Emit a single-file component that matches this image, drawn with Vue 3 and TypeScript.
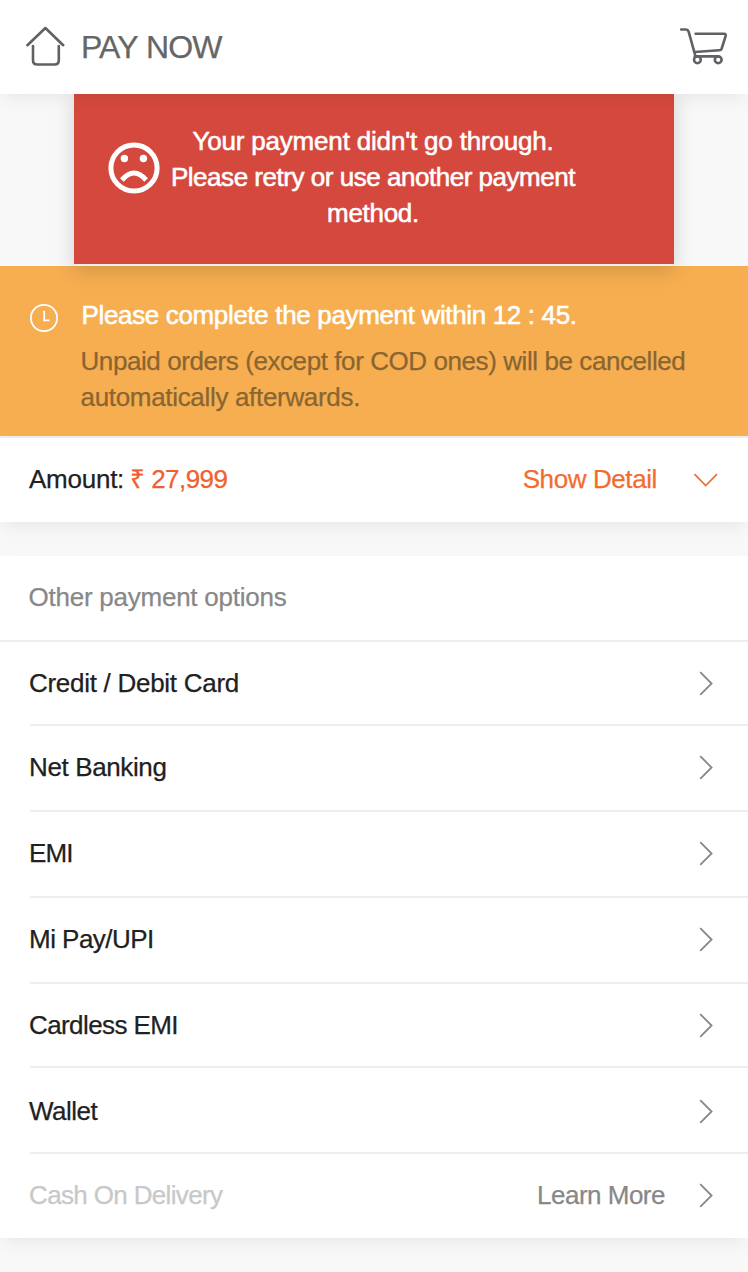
<script setup lang="ts">
interface PaymentOption {
  id: string
  label: string
  action?: string
}

const options: PaymentOption[] = [
  { id: 'card', label: 'Credit / Debit Card' },
  { id: 'net', label: 'Net Banking' },
  { id: 'emi', label: 'EMI' },
  { id: 'upi', label: 'Mi Pay/UPI' },
  { id: 'cardless', label: 'Cardless EMI' },
  { id: 'wallet', label: 'Wallet' },
  { id: 'cod', label: 'Cash On Delivery', action: 'Learn More' },
]
</script>

<template>
  <div class="page">
    <header class="topbar">
      <svg class="home" width="40" height="42" viewBox="0 0 40 42" fill="none">
        <path d="M2.4 20.2 20.4 3 38.2 20.2" />
        <path d="M8 21v14.2q0 4.3 4.3 4.3h17.2q4.3 0 4.3-4.3V21" />
      </svg>
      <h1 class="title">PAY NOW</h1>
      <svg class="cart" width="50" height="40" viewBox="0 0 50 40" fill="none">
        <path d="M2.2 4.5h4.3q2.5 0 3.2 2.4L16.4 31" />
        <path d="M16.6 8.7h28.2q2.5 0 1.8 2.4l-3.9 12.4q-.6 1.7-2.4 1.8L15.6 27" />
        <path d="M15.8 31.4H39" />
        <circle cx="18.4" cy="34.8" r="3.4" />
        <circle cx="39.2" cy="34.8" r="3.4" />
      </svg>
    </header>

    <div class="alert">
      <svg class="sad" width="52" height="52" viewBox="0 0 52 52" fill="none">
        <circle cx="26" cy="26" r="23.1" stroke="#fff" stroke-width="5" />
        <circle cx="16.4" cy="16.5" r="3.7" fill="#fff" />
        <circle cx="35.4" cy="16.5" r="3.7" fill="#fff" />
        <path d="M13.9 38Q26 24 38.1 38" stroke="#fff" stroke-width="5" />
      </svg>
      <p class="alert-text">
        <span class="a1">Your payment didn't go through.</span>
        <span class="a2">Please retry or use another payment</span>
        <span class="a3">method.</span>
      </p>
    </div>

    <section class="notice">
      <svg class="clock" width="28" height="28" viewBox="0 0 28 28" fill="none" stroke="#fff">
        <circle cx="14" cy="14" r="13.1" stroke-width="1.8" />
        <path d="M14.2 6.8v9.6h5.4" stroke-width="1.8" />
      </svg>
      <div class="notice-body">
        <p class="deadline">Please complete the payment within 12 : 45.</p>
        <p class="rule">
          <span class="r1">Unpaid orders (except for COD ones) will be cancelled</span>
          <span class="r2">automatically afterwards.</span>
        </p>
      </div>
    </section>

    <section class="amount">
      <span class="amount-label">Amount:</span>
      <span class="price">₹ 27,999</span>
      <span class="detail">Show Detail</span>
      <svg class="down" width="26" height="14" viewBox="0 0 26 14" fill="none">
        <path d="M1.5 1.2 12.7 12.5 24 1.2" />
      </svg>
    </section>

    <section class="list">
      <h2 class="list-title">Other payment options</h2>
      <div v-for="o in options" :key="o.id" class="row" :class="o.id">
        <span class="label">{{ o.label }}</span>
        <span v-if="o.action" class="action">{{ o.action }}</span>
        <svg class="chevron" width="15" height="26" viewBox="0 0 15 26" fill="none">
          <path d="M1.2 2.1 12.6 13.5 1.2 24.9" />
        </svg>
      </div>
    </section>
  </div>
</template>

<style>
html,
body {
  margin: 0;
  background: #f8f8f8;
}
</style>

<style scoped>
.page {
  width: 748px;
  height: 1272px;
  overflow: hidden;
  background: #f8f8f8;
  color: #212121;
  font-family: "Liberation Sans", Arial, sans-serif;
  font-size: 26px;
  white-space: nowrap;
  -webkit-text-stroke: 0.25px currentColor;
}
h1, h2, p {
  margin: 0;
  font-weight: 400;
}
.topbar {
  position: relative;
  z-index: 3;
  display: flex;
  align-items: center;
  box-sizing: border-box;
  height: 94px;
  padding: 0 19px 0 25px;
  background: #fff;
  box-shadow: 0 8px 16px -4px rgba(0, 0, 0, 0.07);
}
.home, .cart {
  stroke: #5f6165;
  stroke-width: 2.6;
  stroke-linecap: round;
  stroke-linejoin: round;
}
.home {
  margin-bottom: 3px;
}
.cart {
  margin-bottom: 4px;
  margin-left: auto;
}
.title {
  margin-left: 16px;
  font-size: 32px;
  line-height: 94px;
  letter-spacing: -0.9px;
  word-spacing: 1px;
  color: #666;
}
.alert {
  position: relative;
  z-index: 2;
  display: flex;
  box-sizing: border-box;
  width: 600px;
  height: 172px;
  margin: 0 auto;
  padding: 29px 34px 0;
  background: #d5483e;
  border-bottom: 2px solid #eee;
  box-shadow: 0 4px 20px rgba(0, 0, 0, 0.16);
  color: #fff;
  -webkit-text-stroke: 0.55px #fff;
}
.sad {
  margin-top: 19px;
}
.alert-text {
  width: 406px;
  margin-left: 10px;
  line-height: 36px;
  text-align: center;
}
.alert-text span, .rule span {
  display: block;
}
.a1 { letter-spacing: -0.18px; }
.a2 { letter-spacing: -0.47px; }
.a3 { letter-spacing: -0.3px; }
.notice {
  display: flex;
  box-sizing: border-box;
  height: 172px;
  padding: 30px 30px 0;
  background: #f6ae51;
  border-bottom: 2px solid #ececec;
}
.clock {
  margin-top: 8px;
}
.notice-body {
  margin-left: 22.5px;
}
.deadline {
  padding-left: 1px;
  line-height: 38px;
  letter-spacing: -0.35px;
  color: #fff;
  -webkit-text-stroke: 0.55px #fff;
}
.rule {
  margin-top: 9px;
  line-height: 36px;
  color: #896531;
}
.r1 { letter-spacing: -0.42px; }
.r2 { letter-spacing: -0.32px; }
.amount {
  display: flex;
  align-items: center;
  box-sizing: border-box;
  height: 84px;
  padding: 0 29px 2px 29px;
  background: #fff;
  box-shadow: 0 8px 16px -4px rgba(0, 0, 0, 0.07);
}
.amount-label {
  letter-spacing: -0.25px;
}
.price {
  margin-bottom: 2px;
  margin-left: 6px;
  color: #f0602f;
  letter-spacing: -0.55px;
}
.detail {
  margin-left: auto;
  letter-spacing: -0.4px;
  color: #f26c30;
}
.down {
  margin-top: 2px;
  margin-left: 36px;
  stroke: #f26c30;
  stroke-width: 1.7;
}
.list {
  margin-top: 34px;
  background: #fff;
  box-shadow: 0 8px 16px -4px rgba(0, 0, 0, 0.07);
}
.list-title {
  height: 84px;
  padding-left: 28.5px;
  border-bottom: 2px solid #eee;
  font-size: 26px;
  line-height: 82px;
  letter-spacing: -0.24px;
  color: #888;
}
.row {
  display: flex;
  height: 84px;
  margin-left: 30px;
  padding-right: 34px;
  border-bottom: 2px solid #eee;
  line-height: 82px;
}
.label {
  margin-left: -1px;
  letter-spacing: -0.28px;
}
.chevron {
  flex: none;
  margin: 28px 0 0 auto;
  stroke: #888;
  stroke-width: 1.8;
}
.card, .cardless {
  height: 82px;
}
.wallet {
  height: 82px;
  padding-top: 2px;
}
.cod {
  border-bottom: 0;
  color: #c8c8c8;
}
.net .label { letter-spacing: -0.38px; }
.emi .label { letter-spacing: -0.9px; }
.upi .label { letter-spacing: -0.52px; }
.cardless .label { letter-spacing: -0.6px; }
.wallet .label { letter-spacing: -0.5px; }
.cod .label { letter-spacing: -0.65px; }
.action {
  margin-left: auto;
  letter-spacing: -0.5px;
  color: #888;
}
.action + .chevron {
  margin-left: 34px;
}
</style>
